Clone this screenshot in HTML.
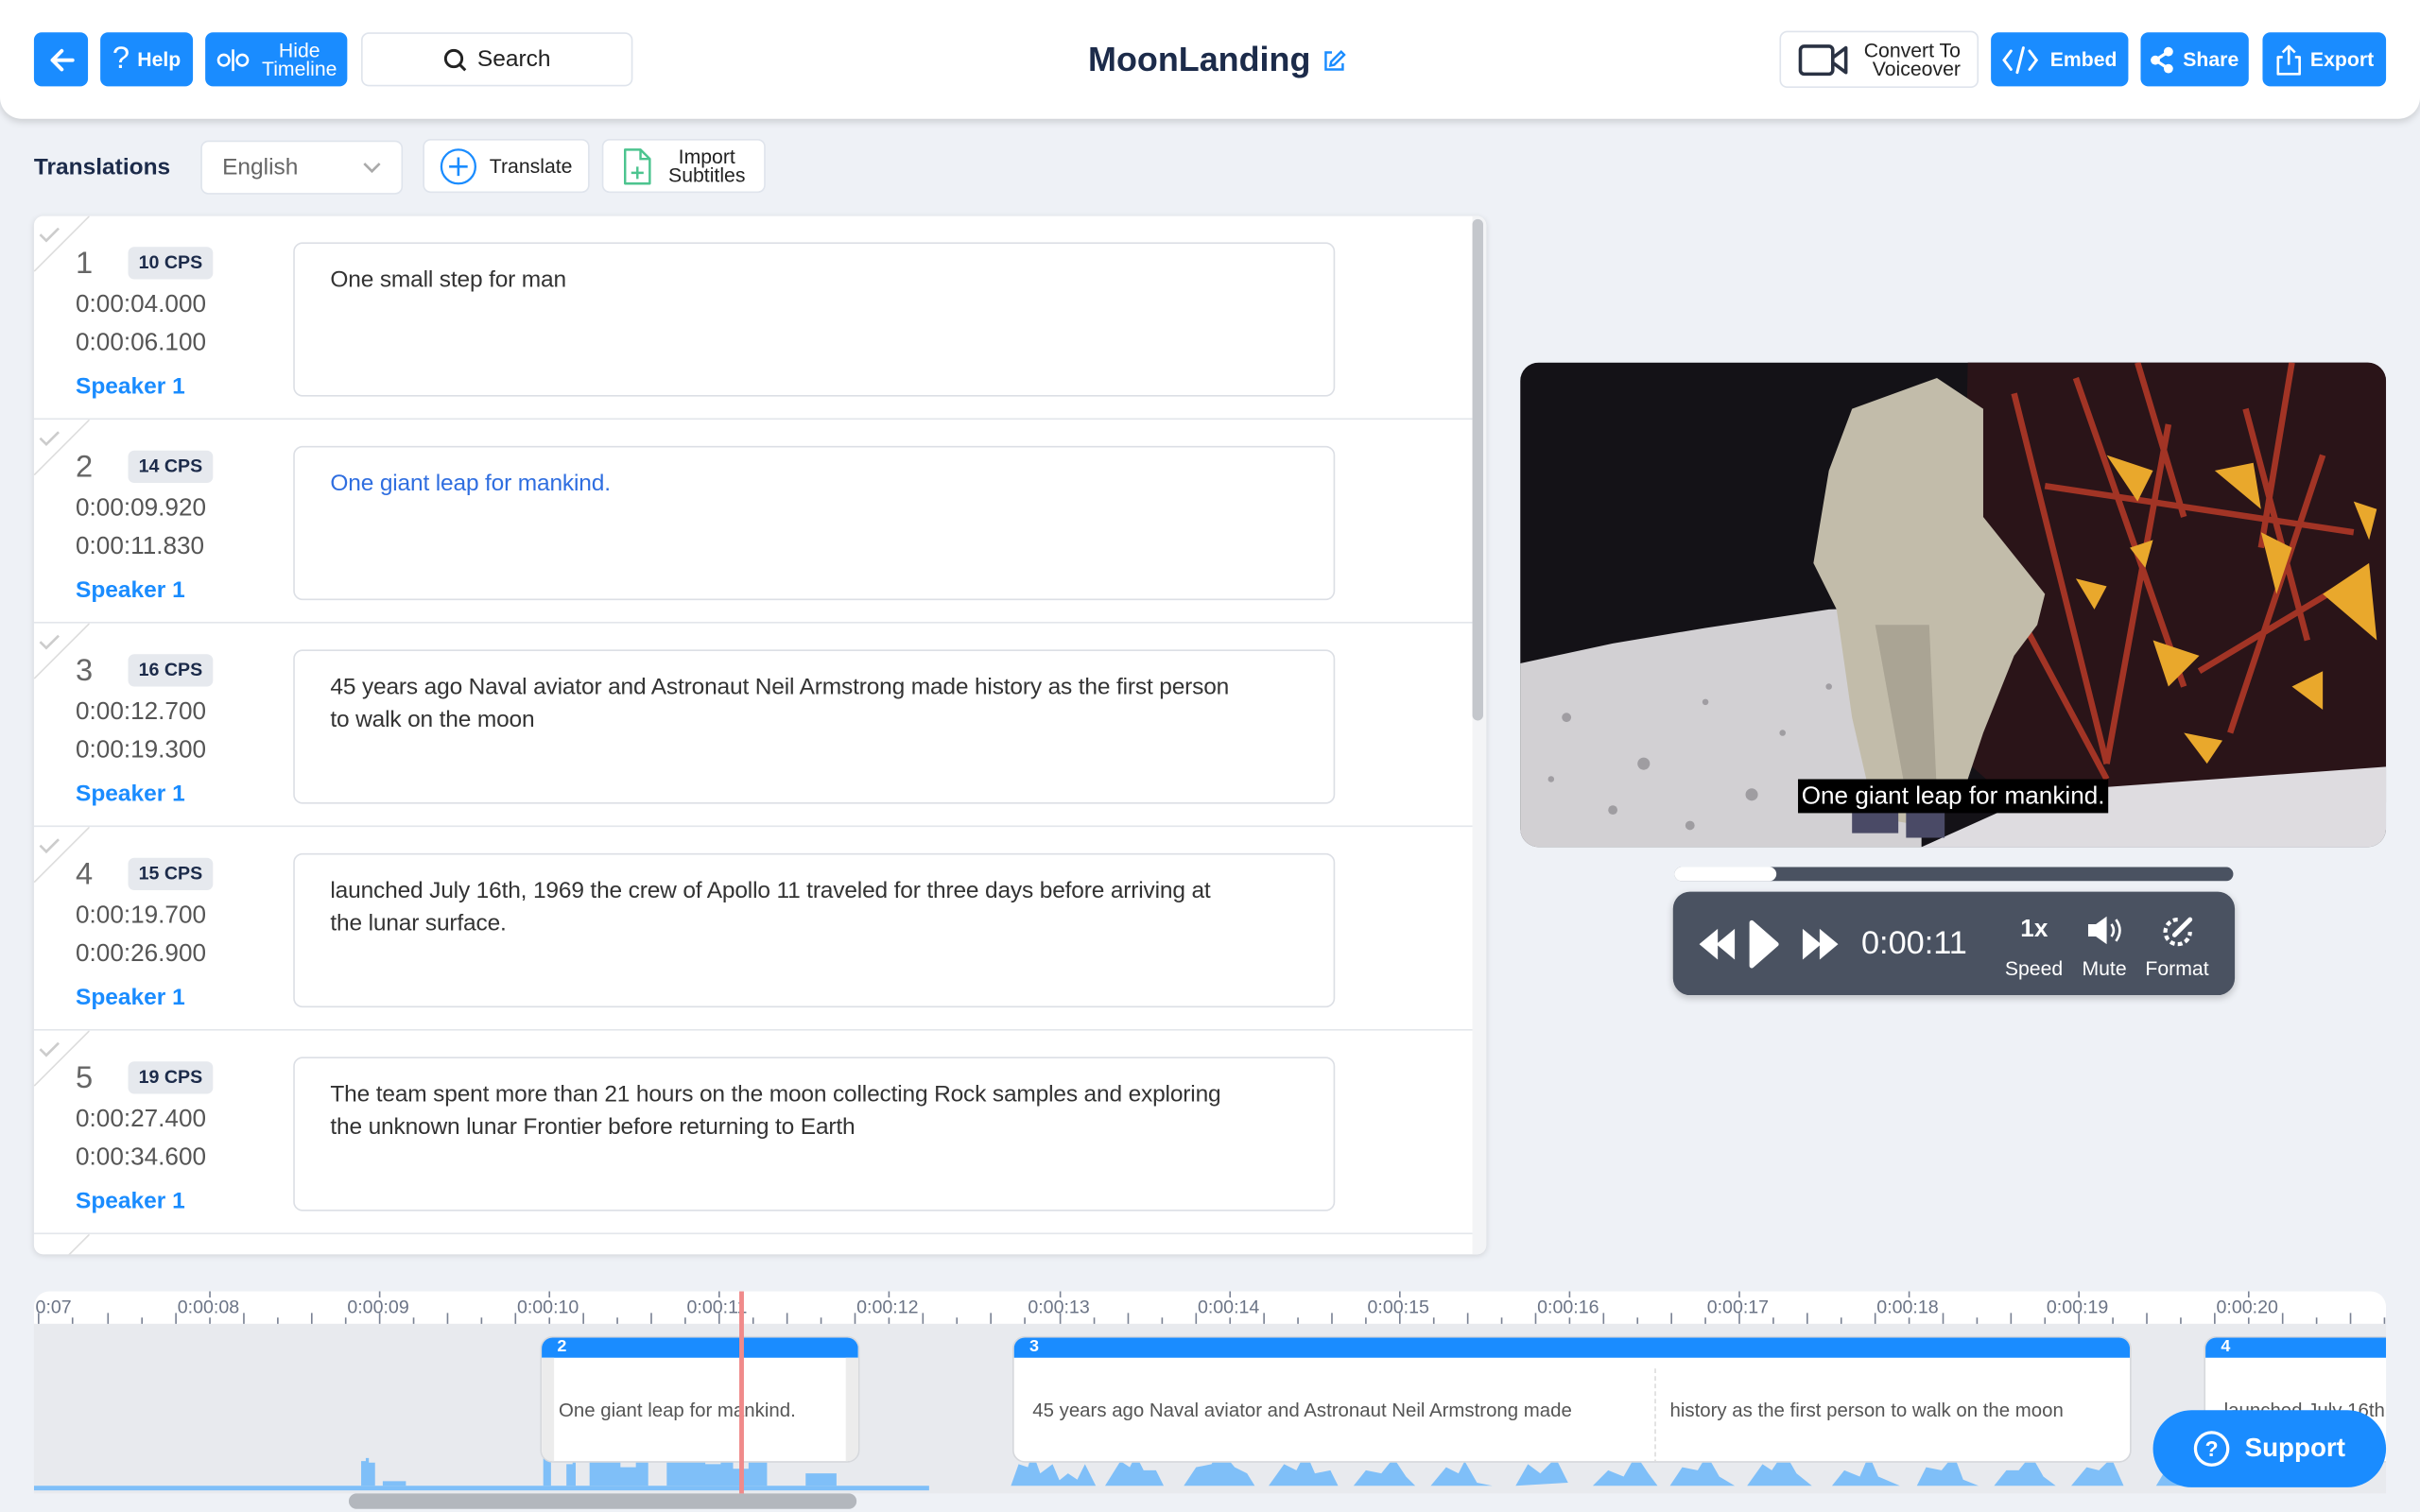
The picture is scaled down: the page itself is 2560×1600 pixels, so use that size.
<!DOCTYPE html>
<html><head><meta charset="utf-8"><style>
*{box-sizing:border-box;margin:0;padding:0}
html,body{width:2560px;height:1600px;overflow:hidden;background:#eef1f6}
#w{width:1568px;height:980px;transform:scale(1.632653);transform-origin:0 0;position:relative;font-family:"Liberation Sans",sans-serif;color:#333}
.a{position:absolute}
.btn{position:absolute;background:#1a8cff;color:#fff;border-radius:5px;font-size:13px;font-weight:bold;display:flex;align-items:center;justify-content:center;gap:5px}
.wb{position:absolute;background:#fff;border:1px solid #dfe4ec;border-radius:5px;display:flex;align-items:center;justify-content:center;gap:6px;font-size:13px;color:#222}
.row{position:absolute;left:0;width:932px;height:132px;border-bottom:1px solid #e3e6eb}
.num{position:absolute;left:27px;top:20px;font-size:20px;color:#666}
.cps{position:absolute;left:61px;top:20px;width:55px;height:21px;background:#e6e9ee;border-radius:4px;font-size:12px;font-weight:bold;color:#1c2b4a;text-align:center;line-height:21px}
.t1,.t2{position:absolute;left:27px;font-size:16px;color:#555}
.t1{top:49px}.t2{top:74px}
.sp{position:absolute;left:27px;top:102px;font-size:15px;font-weight:bold;color:#1a8cff}
.box{position:absolute;left:168px;top:17px;width:675px;height:100px;border:1px solid #dcdfe5;border-radius:6px;padding:13px 23px;font-size:15px;line-height:21px;color:#333;letter-spacing:-0.1px}
.chk{position:absolute;left:0;top:0;width:36px;height:36px}
.lab{position:absolute;top:3px;font-size:12px;color:#6b7486}
.seg{position:absolute;top:866px;height:82px;background:#fff;border:1px solid #d6d8dc;border-radius:8px;overflow:hidden}
.seg .h{height:13px;background:#1a8cff;color:#fff;font-size:11px;font-weight:bold;padding-left:10px;line-height:13px}
.seg .tx{position:absolute;top:40px;font-size:12.5px;color:#555;white-space:nowrap}
</style></head><body><div id="w">
<div class="a" style="left:0;top:0;width:1568px;height:77px;background:#fff;border-radius:0 0 14px 14px;box-shadow:0 2px 5px rgba(0,0,0,.15)"></div>
<div class="btn" style="left:22px;top:21px;width:35px;height:35px"><svg width="18" height="18" viewBox="0 0 18 18"><path d="M16 9H3M9 3L3 9l6 6" stroke="#fff" stroke-width="2.4" fill="none" stroke-linecap="round" stroke-linejoin="round"/></svg></div>
<div class="btn" style="left:65px;top:21px;width:60px;height:35px"><span style="font-size:20px;font-weight:normal">?</span>Help</div>
<div class="btn" style="left:133px;top:21px;width:92px;height:35px;gap:8px"><svg width="22" height="16" viewBox="0 0 22 16"><circle cx="5" cy="8" r="3.5" stroke="#fff" stroke-width="1.6" fill="none"/><circle cx="17" cy="8" r="3.5" stroke="#fff" stroke-width="1.6" fill="none"/><path d="M11 1v14" stroke="#fff" stroke-width="1.6"/></svg><span style="line-height:12px;text-align:center;font-weight:normal">Hide<br>Timeline</span></div>
<div class="wb" style="left:234px;top:21px;width:176px;height:35px;font-size:15px"><svg width="16" height="16" viewBox="0 0 16 16"><circle cx="7" cy="7" r="5.3" stroke="#222" stroke-width="1.8" fill="none"/><path d="M11 11l3.5 3.5" stroke="#222" stroke-width="1.8"/></svg>Search</div>
<div class="a" style="left:705px;top:26px;font-size:22px;font-weight:bold;color:#1c2b4a">MoonLanding</div>
<svg class="a" style="left:857px;top:32px" width="15" height="15" viewBox="0 0 15 15"><path d="M6 2H2v11h11V9" stroke="#1a8cff" stroke-width="1.5" fill="none"/><path d="M12 1.5l2 2-6.5 6.5-2.5.5.5-2.5z" stroke="#1a8cff" stroke-width="1.5" fill="none"/></svg>
<div class="wb" style="left:1153px;top:20px;width:129px;height:37px;gap:10px"><svg width="33" height="22" viewBox="0 0 33 22"><rect x="1.5" y="2" width="21" height="18" rx="2.5" stroke="#2a3243" stroke-width="2.2" fill="none"/><path d="M23 9l8-6v16l-8-6" stroke="#2a3243" stroke-width="2.2" fill="none" stroke-linejoin="round"/></svg><span style="line-height:12px;text-align:right">Convert To<br>Voiceover</span></div>
<div class="btn" style="left:1290px;top:21px;width:89px;height:35px;gap:7px"><svg width="24" height="18" viewBox="0 0 24 18"><path d="M6 3L1.5 9 6 15M18 3l4.5 6L18 15M14 1l-4 16" stroke="#fff" stroke-width="1.8" fill="none" stroke-linecap="round"/></svg>Embed</div>
<div class="btn" style="left:1387px;top:21px;width:70px;height:35px"><svg width="16" height="18" viewBox="0 0 16 18"><circle cx="12" cy="3.5" r="3" fill="#fff"/><circle cx="3.5" cy="9" r="3" fill="#fff"/><circle cx="12" cy="14.5" r="3" fill="#fff"/><path d="M12 3.5L3.5 9l8.5 5.5" stroke="#fff" stroke-width="2" fill="none"/></svg>Share</div>
<div class="btn" style="left:1466px;top:21px;width:80px;height:35px"><svg width="18" height="20" viewBox="0 0 18 20"><path d="M5 8H2v11h14V8h-3M9 13V1M5 5l4-4 4 4" stroke="#fff" stroke-width="1.6" fill="none" stroke-linejoin="round"/></svg>Export</div>
<div class="a" style="left:22px;top:100px;font-size:15px;font-weight:bold;color:#1c2b4a">Translations</div>
<div class="wb" style="left:130px;top:91px;width:131px;height:35px;justify-content:space-between;padding:0 13px;font-size:15px;color:#666">English<svg width="12" height="8" viewBox="0 0 12 8"><path d="M1 1l5 5 5-5" stroke="#aaa" stroke-width="1.6" fill="none"/></svg></div>
<div class="wb" style="left:274px;top:90px;width:108px;height:35px;gap:8px"><svg width="24" height="24" viewBox="0 0 24 24"><circle cx="12" cy="12" r="11" stroke="#1a8cff" stroke-width="1.4" fill="none"/><path d="M12 6v12M6 12h12" stroke="#1a8cff" stroke-width="1.6"/></svg><b style="font-weight:normal">Translate</b></div>
<div class="wb" style="left:390px;top:90px;width:106px;height:35px;gap:10px"><svg width="20" height="26" viewBox="0 0 20 26"><path d="M2 2h10l6 6v16H2z" stroke="#4cc48f" stroke-width="1.5" fill="none" stroke-linejoin="round"/><path d="M12 2v6h6M10 13v8M6 17h8" stroke="#4cc48f" stroke-width="1.5" fill="none"/></svg><span style="line-height:12px;text-align:center">Import<br>Subtitles</span></div>
<div class="a" style="left:22px;top:140px;width:941px;height:673px;background:#fff;border-radius:6px;box-shadow:0 1px 4px rgba(0,0,0,.12);overflow:hidden">
 <div class="a" style="left:932px;top:0;width:9px;height:673px;background:#f3f4f6"></div>
 <div class="a" style="left:932px;top:2px;width:7px;height:325px;background:#c4c7cc;border-radius:4px"></div>
 <div class="row" style="top:0"><svg class="chk" viewBox="0 0 36 36"><path d="M0 36L36 0" stroke="#ddd" stroke-width="1"/><path d="M4 12l4 4 8-8" stroke="#ccc" stroke-width="1.6" fill="none"/></svg><div class="num">1</div><div class="cps">10 CPS</div><div class="t1">0:00:04.000</div><div class="t2">0:00:06.100</div><div class="sp">Speaker 1</div><div class="box">One small step for man</div></div>
 <div class="row" style="top:132px"><svg class="chk" viewBox="0 0 36 36"><path d="M0 36L36 0" stroke="#ddd" stroke-width="1"/><path d="M4 12l4 4 8-8" stroke="#ccc" stroke-width="1.6" fill="none"/></svg><div class="num">2</div><div class="cps">14 CPS</div><div class="t1">0:00:09.920</div><div class="t2">0:00:11.830</div><div class="sp">Speaker 1</div><div class="box" style="color:#2f6ee0">One giant leap for mankind.</div></div>
 <div class="row" style="top:264px"><svg class="chk" viewBox="0 0 36 36"><path d="M0 36L36 0" stroke="#ddd" stroke-width="1"/><path d="M4 12l4 4 8-8" stroke="#ccc" stroke-width="1.6" fill="none"/></svg><div class="num">3</div><div class="cps">16 CPS</div><div class="t1">0:00:12.700</div><div class="t2">0:00:19.300</div><div class="sp">Speaker 1</div><div class="box">45 years ago Naval aviator and Astronaut Neil Armstrong made history as the first person<br>to walk on the moon</div></div>
 <div class="row" style="top:396px"><svg class="chk" viewBox="0 0 36 36"><path d="M0 36L36 0" stroke="#ddd" stroke-width="1"/><path d="M4 12l4 4 8-8" stroke="#ccc" stroke-width="1.6" fill="none"/></svg><div class="num">4</div><div class="cps">15 CPS</div><div class="t1">0:00:19.700</div><div class="t2">0:00:26.900</div><div class="sp">Speaker 1</div><div class="box">launched July 16th, 1969 the crew of Apollo 11 traveled for three days before arriving at<br>the lunar surface.</div></div>
 <div class="row" style="top:528px"><svg class="chk" viewBox="0 0 36 36"><path d="M0 36L36 0" stroke="#ddd" stroke-width="1"/><path d="M4 12l4 4 8-8" stroke="#ccc" stroke-width="1.6" fill="none"/></svg><div class="num">5</div><div class="cps">19 CPS</div><div class="t1">0:00:27.400</div><div class="t2">0:00:34.600</div><div class="sp">Speaker 1</div><div class="box">The team spent more than 21 hours on the moon collecting Rock samples and exploring<br>the unknown lunar Frontier before returning to Earth</div></div>
 <div class="row" style="top:660px;border:none"><svg class="chk" viewBox="0 0 36 36"><path d="M0 36L36 0" stroke="#ddd" stroke-width="1"/></svg></div>
</div>
<svg class="a" style="left:985px;top:235px;border-radius:12px" width="561" height="314" viewBox="0 0 561 314">
<rect width="561" height="314" fill="#141217"/>
<path d="M0 195L60 182 120 172 200 160 260 158 260 314 0 314z" fill="#d2d0d3"/>
<g fill="#8a888d" opacity=".7"><circle cx="30" cy="230" r="3"/><circle cx="80" cy="260" r="4"/><circle cx="120" cy="220" r="2"/><circle cx="60" cy="290" r="3"/><circle cx="150" cy="280" r="4"/><circle cx="170" cy="240" r="2"/><circle cx="20" cy="270" r="2"/><circle cx="110" cy="300" r="3"/><circle cx="200" cy="210" r="2"/></g>
<path d="M290 0H561V285L430 295 330 295 285 255z" fill="#2a1418"/>
<path d="M320 20l60 240M360 10l70 200M420 40l-40 220M470 30l40 150M520 60l-60 180M340 80l200 30M300 120l80 150M400 0l30 100M500 0l-20 120M440 200l100-60" stroke="#b83a28" stroke-width="4" opacity=".85"/>
<path d="M380 60l30 10-10 20zM450 70l25-5 5 30zM520 150l30-20 5 50zM410 180l30 10-20 20zM480 110l20 10-10 30zM360 140l20 5-8 15zM430 240l25 5-10 15zM500 210l20-10 0 25zM540 90l15 5-5 20zM395 120l15-5-5 18z" fill="#e9a82c"/>
<path d="M340 278L561 262 561 314 260 314z" fill="#dedce0"/>
<path d="M215 30L270 10 300 30 300 100 340 150 335 170 320 190 300 240 290 270 260 300 230 295 215 230 205 160 190 130 200 70z" fill="#c2bcaa"/>
<path d="M230 170l20 110 20 0 -5-110z" fill="#aaa494"/>
<path d="M215 275h30v30h-30zM250 283h25v25h-25z" fill="#4a4a66"/>
<rect x="180" y="270" width="201" height="22" fill="#000"/>
<text x="280.5" y="286" fill="#fff" font-size="16" text-anchor="middle" font-family="Liberation Sans">One giant leap for mankind.</text>
</svg>
<div class="a" style="left:1085px;top:562px;width:362px;height:9px;background:#4a5261;border-radius:5px"></div>
<div class="a" style="left:1085px;top:562px;width:66px;height:9px;background:#fff;border-radius:5px"></div>
<div class="a" style="left:1084px;top:578px;width:364px;height:67px;background:#4a5261;border-radius:11px;box-shadow:0 2px 5px rgba(0,0,0,.2)"></div>
<svg class="a" style="left:1101px;top:595px" width="95" height="35" viewBox="0 0 95 35"><path d="M0 17L12 7V27zM11 17L23 7V27z" fill="#fff"/><path d="M34 3L50 17 34 31z" fill="#fff" stroke="#fff" stroke-width="3" stroke-linejoin="round"/><path d="M67 7L79 17 67 27zM78 7L90 17 78 27z" fill="#fff"/></svg>
<div class="a" style="left:1206px;top:600px;font-size:21px;color:#fff">0:00:11</div>
<div class="a" style="left:1299px;top:594px;width:38px;text-align:center;font-size:16px;font-weight:bold;color:#fff">1x</div>
<svg class="a" style="left:1352px;top:593px" width="25" height="20" viewBox="0 0 25 20"><path d="M1 6h5l7-5v18l-7-5H1z" fill="#fff"/><path d="M16 6q3 4 0 8M19 3q5 7 0 14" stroke="#fff" stroke-width="1.6" fill="none"/></svg>
<svg class="a" style="left:1400px;top:593px" width="22" height="22" viewBox="0 0 22 22"><path d="M11 3a8 8 0 1 0 8 8" stroke="#fff" stroke-width="2.6" fill="none" stroke-dasharray="3 2"/><path d="M9 13L19 3" stroke="#fff" stroke-width="3" stroke-linecap="round"/></svg>
<div class="a" style="left:1299px;top:620px;font-size:13px;color:#fff">Speed</div>
<div class="a" style="left:1349px;top:620px;font-size:13px;color:#fff">Mute</div>
<div class="a" style="left:1390px;top:620px;font-size:13px;color:#fff">Format</div>
<div class="a" style="left:22px;top:837px;width:1524px;height:131px;background:#e8eaee;border-radius:10px 10px 0 0;overflow:hidden">
 <div class="a" style="left:0;top:0;width:1524px;height:21px;background:#fff"></div>
 <svg class="a" style="left:0;top:0" width="1524" height="22"><g stroke="#7a8294" stroke-width="1">
 <path d="M3 14v7M25 17v4M48 14v7M70 17v4M92 14v7M114 17v4M136 14v7M158 17v4M180 14v7M202 17v4M224 14v7M246 17v4M268 14v7M290 17v4M312 14v7M334 17v4M356 14v7M378 17v4M400 14v7M422 17v4M444 14v7M466 17v4M488 14v7M510 17v4M532 14v7M554 17v4M576 14v7M598 17v4M620 14v7M642 17v4M665 14v7M687 17v4M709 14v7M731 17v4M753 14v7M775 17v4M797 14v7M819 17v4M841 14v7M863 17v4M885 14v7M907 17v4M929 14v7M951 17v4M973 14v7M995 17v4M1017 14v7M1039 17v4M1061 14v7M1083 17v4M1105 14v7M1127 17v4M1149 14v7M1171 17v4M1193 14v7M1215 17v4M1237 14v7M1259 17v4M1281 14v7M1303 17v4M1325 14v7M1347 17v4M1369 14v7M1391 17v4M1413 14v7M1435 17v4M1457 14v7M1479 17v4M1501 14v7M1523 17v4"/>
 <path d="M114 0v4M224 0v4M334 0v4M444 0v4M554 0v4M665 0v4M775 0v4M885 0v4M995 0v4M1105 0v4M1215 0v4M1325 0v4M1435 0v4"/></g></svg>
 <div class="lab" style="left:1px">0:07</div><div class="lab" style="left:93px">0:00:08</div><div class="lab" style="left:203px">0:00:09</div><div class="lab" style="left:313px">0:00:10</div><div class="lab" style="left:423px">0:00:11</div><div class="lab" style="left:533px">0:00:12</div><div class="lab" style="left:644px">0:00:13</div><div class="lab" style="left:754px">0:00:14</div><div class="lab" style="left:864px">0:00:15</div><div class="lab" style="left:974px">0:00:16</div><div class="lab" style="left:1084px">0:00:17</div><div class="lab" style="left:1194px">0:00:18</div><div class="lab" style="left:1304px">0:00:19</div><div class="lab" style="left:1414px">0:00:20</div>
 <svg class="a" style="left:0;top:104px" width="1524" height="27" viewBox="0 0 1524 27"><g fill="#7fbff8">
 <rect x="0" y="22" width="580" height="3"/>
 <path d="M212 22V6h3v-2h2v3h4v15zM226 22v-3h15v3z"/>
 <path d="M330 22V4h5v18zM345 22V8h4v-4h2v18zM360 22V4h20v6h10V4h8v18zM410 22V6h15v-4h10v6h10v-3h8v6h10V4h12v18zM500 22V14h20v8z"/>
 <path d="M633 22l5-14 6 2 3-10 5 14 8-6 6 14zM660 22l10-8 6 4 5-10 7 14zM694 22l10-16 6 4 4-8 5 10 8 0 5 10zM745 22l8-12 10-2 5-10 10 12 8 4 5 8zM800 22l10-14 8 4 6-12 6 14 10-2 5 10zM855 22l8-10 10 2 8-10 8 12 6 6zM905 22l10-12 8 4 4-8 8 14 10 2zM960 22l8-14 8 6 10-10 8 16zM1010 22l10-10 10 4 8-14 8 12 6 8zM1060 22l8-12 10 2 6-10 8 14 10 6zM1110 22l10-14 6 4 8-12 8 14 10 8zM1165 22l8-10 10 4 6-14 6 14 14 6zM1220 22l6-12 10 2 8-10 6 16 10 4zM1270 22l8-10 8 0 8-10 8 14 8 6zM1320 22l10-12 8 2 8-8 8 18zM1375 22l6-10 8 0 6-10 6 20zM1410 22l8-14 8 4 6-10 6 12 8 8zM1460 22l10-10 8 4 8-10 8 16 10 0 12 0 0 0z"/>
 </g></svg>
</div>
<div class="a" style="left:226px;top:968px;width:329px;height:10px;background:#b3b7bd;border-radius:5px"></div>
<div class="seg" style="left:350px;width:207px"><div class="h">2</div><div class="a" style="left:0;top:13px;width:8px;height:69px;background:#ececec"></div><div class="a" style="right:0;top:13px;width:8px;height:69px;background:#ececec"></div><div class="tx" style="left:11px">One giant leap for mankind.</div></div>
<div class="seg" style="left:656px;width:725px"><div class="h">3</div><div class="a" style="left:415px;top:20px;height:62px;border-left:1px dashed #ddd"></div><div class="tx" style="left:12px">45 years ago Naval aviator and Astronaut Neil Armstrong made</div><div class="tx" style="left:425px">history as the first person to walk on the moon</div></div>
<div class="seg" style="left:1428px;width:118px;border-radius:8px 0 0 8px;border-right:none"><div class="h">4</div><div class="tx" style="left:12px">launched July 16th</div></div>
<div class="a" style="left:479px;top:837px;width:3px;height:131px;background:#f08a8a"></div>
<div class="a" style="left:1395px;top:914px;width:151px;height:50px;background:#1a8cff;border-radius:25px;color:#fff;font-size:17px;font-weight:bold;display:flex;align-items:center;justify-content:center;gap:9px"><svg width="24" height="24" viewBox="0 0 24 24"><circle cx="12" cy="12" r="10.5" stroke="#fff" stroke-width="2" fill="none"/><text x="12" y="17" fill="#fff" font-size="14" font-weight="bold" text-anchor="middle" font-family="Liberation Sans">?</text></svg>Support</div>
</div></body></html>
